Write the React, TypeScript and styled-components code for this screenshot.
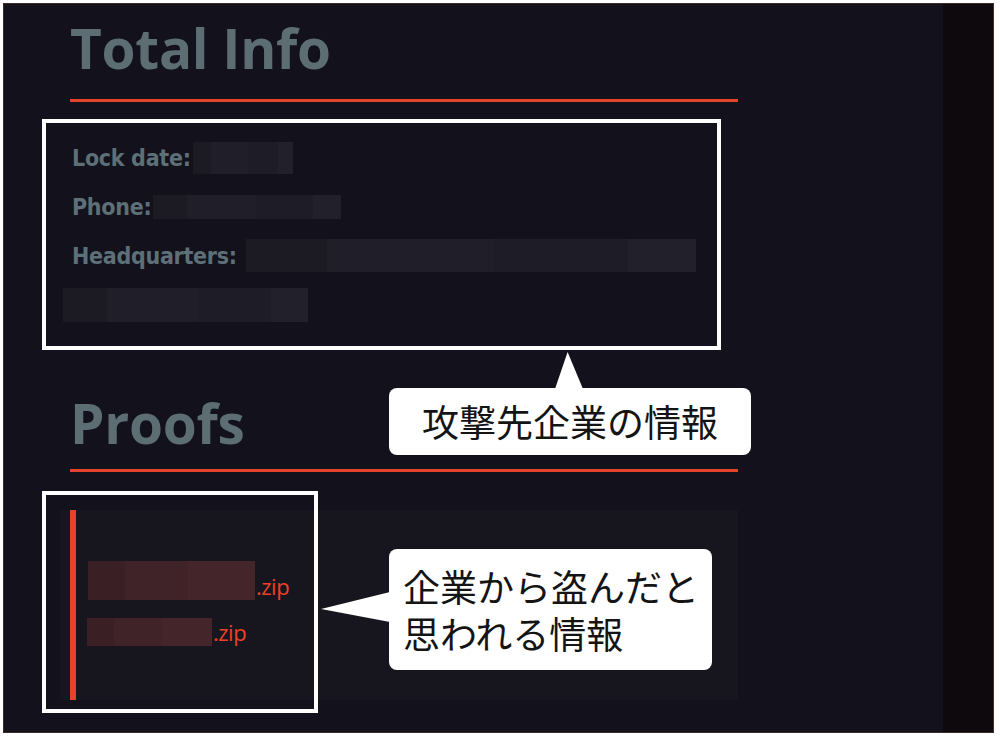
import React from 'react'
import styled, { createGlobalStyle } from 'styled-components'

const GlobalStyle = createGlobalStyle`
  html, body {
    margin: 0;
    padding: 0;
    background: #ffffff;
  }
  body {
    font-family: "Open Sans", "Noto Sans CJK JP", sans-serif;
  }
`

const Frame = styled.div`
  position: relative;
  margin: 3px 0 0 3px;
  width: 991px;
  height: 730px;
  box-sizing: border-box;
  border: 1px solid #3d2e2a;
  background: #13111b;
  display: grid;
  grid-template-columns: 1fr 50px;
  overflow: hidden;
`

const Main = styled.main`
  position: relative;
  padding: 16px 0 0 66px;
`

const SideStrip = styled.aside`
  background: #0d090c;
`

const Heading = styled.h2`
  margin: 0;
  font: 700 55px/55px "Open Sans", sans-serif;
  color: #5c6d73;
  letter-spacing: -0.3px;
`

const Rule = styled.div<{ $gap: number }>`
  width: 668px;
  height: 3px;
  margin-top: ${p => p.$gap}px;
  background: #e5432b;
`

const InfoBox = styled.section`
  box-sizing: border-box;
  width: 679px;
  height: 231px;
  margin: 17px 0 45px -28px;
  padding: 10px 0 0 26px;
  border: 4px solid #ffffff;
  display: flex;
  flex-direction: column;
`

const InfoRow = styled.div`
  height: 49px;
  display: flex;
  align-items: center;
`

const Label = styled.span`
  font: 700 23px "DejaVu Sans Condensed", "DejaVu Sans", sans-serif;
  color: #5d6f77;
  letter-spacing: -0.3px;
`

const Redacted = styled.span<{ $w: number; $h: number; $offset?: number; $tone?: 'grey' | 'red' }>`
  display: inline-block;
  width: ${p => p.$w}px;
  height: ${p => p.$h}px;
  margin-left: ${p => p.$offset ?? 2}px;
  background: ${p =>
    p.$tone === 'red'
      ? 'linear-gradient(90deg, #3a2024 0 22%, #3f2328 22% 60%, #43252a 60% 100%)'
      : 'linear-gradient(90deg, #1c1b24 0 18%, #201f29 18% 55%, #1e1d27 55% 85%, #22212b 85% 100%)'};
`

const Panel = styled.section`
  position: relative;
  box-sizing: border-box;
  width: 678px;
  height: 190px;
  margin: 38px 0 0 -10px;
  padding-left: 10px;
  background: #17161f;
  display: flex;
`

const AccentBar = styled.div`
  width: 6px;
  background: #e5432b;
`

const FileList = styled.div`
  display: flex;
  flex-direction: column;
  gap: 18px;
  padding: 51px 0 0 12px;
`

const FileRow = styled.div<{ $offset?: number }>`
  display: flex;
  align-items: flex-end;
  margin-left: ${p => p.$offset ?? 0}px;
`

const Ext = styled.span`
  font: 400 22px/22px "Open Sans", sans-serif;
  color: #ee4124;
  letter-spacing: -0.5px;
  margin: 0 0 3px 1px;
`

const Highlight = styled.div`
  position: absolute;
  left: -18px;
  top: -19px;
  width: 276px;
  height: 222px;
  box-sizing: border-box;
  border: 4px solid #ffffff;
`

const Callout = styled.div<{ $left: number; $top: number; $w: number; $h: number; $center?: boolean }>`
  position: absolute;
  left: ${p => p.$left}px;
  top: ${p => p.$top}px;
  width: ${p => p.$w}px;
  height: ${p => p.$h}px;
  box-sizing: border-box;
  padding-left: ${p => (p.$center ? 0 : 14)}px;
  background: #ffffff;
  border-radius: 8px;
  display: flex;
  flex-direction: column;
  justify-content: center;
  align-items: ${p => (p.$center ? 'center' : 'flex-start')};
  font: 400 37px/47px "Noto Sans CJK JP", sans-serif;
  color: #141414;
`

const PointerUp = styled.div`
  position: absolute;
  left: 166px;
  top: -36px;
  width: 28px;
  height: 37px;
  background: #ffffff;
  clip-path: polygon(45% 0, 100% 100%, 0 100%);
`

const PointerLeft = styled.div`
  position: absolute;
  left: -68px;
  top: 43px;
  width: 69px;
  height: 30px;
  background: #ffffff;
  clip-path: polygon(0 57%, 100% 0, 100% 100%);
`

const App: React.FC = () => {
  return (
    <>
      <GlobalStyle />
      <Frame>
        <Main>
          <Heading>Total Info</Heading>
          <Rule $gap={24} />
          <InfoBox>
            <InfoRow>
              <Label>Lock date:</Label>
              <Redacted $w={100} $h={32} />
            </InfoRow>
            <InfoRow>
              <Label>Phone:</Label>
              <Redacted $w={188} $h={24} />
            </InfoRow>
            <InfoRow>
              <Label>Headquarters:</Label>
              <Redacted $w={450} $h={33} $offset={9} />
            </InfoRow>
            <InfoRow>
              <Redacted $w={245} $h={34} $offset={-9} />
            </InfoRow>
          </InfoBox>

          <Heading>Proofs</Heading>
          <Rule $gap={19} />
          <Panel>
            <AccentBar />
            <FileList>
              <FileRow>
                <Redacted $w={167} $h={39} $offset={0} $tone="red" />
                <Ext>.zip</Ext>
              </FileRow>
              <FileRow $offset={-1}>
                <Redacted $w={125} $h={28} $offset={0} $tone="red" />
                <Ext>.zip</Ext>
              </FileRow>
            </FileList>
            <Highlight />
          </Panel>
        </Main>
        <SideStrip />

        <Callout $left={385} $top={384} $w={362} $h={67} $center>
          <PointerUp />
          攻撃先企業の情報
        </Callout>
        <Callout $left={385} $top={545} $w={323} $h={121}>
          <PointerLeft />
          <span>企業から盗んだと</span>
          <span>思われる情報</span>
        </Callout>
      </Frame>
    </>
  )
}

export default App
